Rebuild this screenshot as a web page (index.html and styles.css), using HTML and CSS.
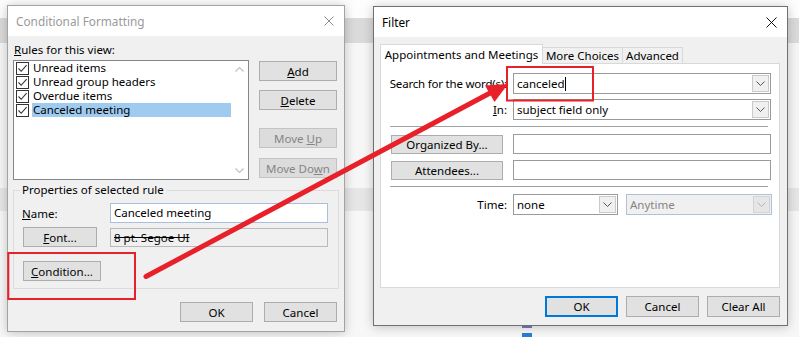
FILE: index.html
```html
<!DOCTYPE html>
<html lang="en">
<head>
  <meta charset="UTF-8">
  <meta name="viewport" content="width=device-width, initial-scale=1.0">
  <title>Conditional Formatting - Filter</title>
  <link rel="stylesheet" href="styles.css">
</head>
<body>
  <!-- the mail window behind the dialogs -->
  <div class="app">
    <div class="app-top"></div>
    <div class="app-ribbon"></div>
    <div class="app-pane"></div>
    <div class="app-header"></div>
    <div class="app-list">
      <span class="mark purple"></span>
      <span class="mark blue"></span>
    </div>
  </div>

  <div class="dlg dlg-cf">
    <div class="titlebar">
      <span class="title">Conditional Formatting</span>
      <svg class="close" width="10" height="10" viewBox="0 0 10 10">
        <path d="M0.5 0.5L9.5 9.5M9.5 0.5L0.5 9.5" stroke="#8c8c8c" stroke-width="1" fill="none"/>
      </svg>
    </div>
    <div class="cf-body">
      <div class="cf-label"><u>R</u>ules for this view:</div>
      <div class="rules-row">
        <div class="listbox">
          <div class="rules">
            <div class="rule"><span class="cb"><svg width="11" height="11" viewBox="0 0 11 11"><path d="M1.5 5.5L4.2 8.3L9.6 2.2" stroke="#333" stroke-width="1.1" fill="none"/></svg></span><span class="rule-name">Unread items</span></div>
            <div class="rule"><span class="cb"><svg width="11" height="11" viewBox="0 0 11 11"><path d="M1.5 5.5L4.2 8.3L9.6 2.2" stroke="#333" stroke-width="1.1" fill="none"/></svg></span><span class="rule-name">Unread group headers</span></div>
            <div class="rule"><span class="cb"><svg width="11" height="11" viewBox="0 0 11 11"><path d="M1.5 5.5L4.2 8.3L9.6 2.2" stroke="#333" stroke-width="1.1" fill="none"/></svg></span><span class="rule-name">Overdue items</span></div>
            <div class="rule sel"><span class="cb"><svg width="11" height="11" viewBox="0 0 11 11"><path d="M1.5 5.5L4.2 8.3L9.6 2.2" stroke="#333" stroke-width="1.1" fill="none"/></svg></span><span class="rule-name">Canceled meeting</span></div>
          </div>
          <div class="vscroll">
            <span class="arrow"><svg width="9" height="5" viewBox="0 0 9 5"><path d="M0.5 4.5L4.5 0.5L8.5 4.5" stroke="#c2c2c2" stroke-width="1.2" fill="none"/></svg></span>
            <span class="arrow"><svg width="9" height="5" viewBox="0 0 9 5"><path d="M0.5 0.5L4.5 4.5L8.5 0.5" stroke="#c2c2c2" stroke-width="1.2" fill="none"/></svg></span>
          </div>
        </div>
        <div class="side">
          <button class="btn btn-add"><u>A</u>dd</button>
          <button class="btn btn-delete"><u>D</u>elete</button>
          <button class="btn btn-up" disabled>Move <u>U</u>p</button>
          <button class="btn btn-down" disabled>Move Do<u>w</u>n</button>
        </div>
      </div>

      <fieldset class="props">
        <legend>Properties of selected rule</legend>
        <div class="prop-row">
          <label><u>N</u>ame:</label>
          <div class="field">Canceled meeting</div>
        </div>
        <div class="prop-row font-row">
          <button class="btn btn-font"><u>F</u>ont...</button>
          <div class="field field-ro"><s>8 pt. Segoe UI</s></div>
        </div>
        <div class="prop-row cond-row">
          <button class="btn btn-cond"><u>C</u>ondition...</button>
        </div>
      </fieldset>

      <div class="footer">
        <button class="btn">OK</button>
        <button class="btn">Cancel</button>
      </div>
    </div>
  </div>

  <div class="dlg dlg-filter">
    <div class="titlebar">
      <span class="title">Filter</span>
      <svg class="close" width="11" height="11" viewBox="0 0 11 11">
        <path d="M0.5 0.5L10.5 10.5M10.5 0.5L0.5 10.5" stroke="#111" stroke-width="1" fill="none"/>
      </svg>
    </div>
    <div class="fl-body">
      <div class="tabs">
        <div class="tab active">Appointments and Meetings</div>
        <div class="tab tab-more">More Choices</div>
        <div class="tab tab-adv">Advanced</div>
      </div>
      <div class="panel">
        <div class="frow">
          <label class="tight">Search for the word<u>(s)</u>:</label>
          <div class="combo">canceled<span class="caret"></span>
            <span class="drop"><svg width="9" height="5" viewBox="0 0 9 5"><path d="M0.5 0.5L4.5 4.5L8.5 0.5" stroke="#555" stroke-width="1" fill="none"/></svg></span>
          </div>
        </div>
        <div class="frow in-row">
          <label><u>I</u>n:</label>
          <div class="combo">subject field only
            <span class="drop"><svg width="9" height="5" viewBox="0 0 9 5"><path d="M0.5 0.5L4.5 4.5L8.5 0.5" stroke="#555" stroke-width="1" fill="none"/></svg></span>
          </div>
        </div>
        <div class="sep"></div>
        <div class="frow btn-row">
          <button class="btn btn-wide">Organized By...</button>
          <div class="input"></div>
        </div>
        <div class="frow btn-row second">
          <button class="btn btn-wide">Attendees...</button>
          <div class="input"></div>
        </div>
        <div class="sep"></div>
        <div class="frow time-row">
          <label>Time:</label>
          <div class="combo">none
            <span class="drop"><svg width="9" height="5" viewBox="0 0 9 5"><path d="M0.5 0.5L4.5 4.5L8.5 0.5" stroke="#555" stroke-width="1" fill="none"/></svg></span>
          </div>
          <div class="combo disabled">Anytime
            <span class="drop"><svg width="9" height="5" viewBox="0 0 9 5"><path d="M0.5 0.5L4.5 4.5L8.5 0.5" stroke="#b4b4b4" stroke-width="1" fill="none"/></svg></span>
          </div>
        </div>
      </div>
      <div class="fl-foot">
        <button class="btn btn-default">OK</button>
        <button class="btn">Cancel</button>
        <button class="btn">Clear All</button>
      </div>
    </div>
  </div>

  <!-- red call-outs drawn over the screenshot -->
  <svg class="annot" width="799" height="337" viewBox="0 0 799 337">
    <rect x="8.3" y="253" width="126.7" height="46" fill="none" stroke="#e8202a" stroke-width="2"/>
    <rect x="507" y="67" width="86" height="33.5" fill="none" stroke="#e8202a" stroke-width="2"/>
    <line x1="146" y1="276.5" x2="491" y2="92.5" stroke="#e8202a" stroke-width="5" stroke-linecap="round"/>
    <polygon points="508,84 485,85.5 494.5,102" fill="#e8202a"/>
  </svg>
</body>
</html>
```

FILE: styles.css
```css
* {
  box-sizing: border-box;
}

body {
  margin: 0;
  width: 799px;
  height: 337px;
  overflow: hidden;
  position: relative;
  background-color: #f7f7f7;
  font-family: "Noto Sans", "Segoe UI", sans-serif;
  font-size: 11.5px;
  color: #000;
}

/* background window */
.app-top {
  height: 18px;
  background-color: #fdfdfd;
}
.app-ribbon {
  height: 25px;
  background-color: #dadada;
}
.app-pane {
  height: 145px;
  background-color: #f6f6f6;
}
.app-header {
  height: 23px;
  background-color: #e6e6e6;
}
.app-list {
  padding: 112px 0 0 522px;
  display: flex;
  flex-direction: column;
  gap: 5px;
}
.mark {
  display: block;
  width: 10px;
  height: 5px;
}
.mark.purple {
  border: 2px solid #8174c4;
  background-color: #d8d3ef;
}
.mark.blue {
  background-color: #2b7cd3;
}

/* dialogs */
.dlg {
  position: absolute;
  display: flex;
  flex-direction: column;
  background-color: #f0f0f0;
  border: 1px solid #a3a3a3;
  box-shadow: 0 1px 10px rgba(0, 0, 0, 0.22);
}
.dlg-cf {
  left: 7px;
  top: 5px;
  width: 338px;
  height: 327px;
}
.dlg-filter {
  left: 373px;
  top: 6px;
  width: 415px;
  height: 320px;
  border-color: #707070;
}

.titlebar {
  flex: none;
  height: 30px;
  background-color: #fff;
  display: flex;
  align-items: center;
  justify-content: space-between;
  padding: 0 10px 0 8px;
}
.title {
  font-size: 11.8px;
}
.dlg-cf .title {
  color: #9a9a9a;
}

.btn {
  font: inherit;
  color: #000;
  height: 20px;
  padding: 0;
  background-color: #e1e1e1;
  border: 1px solid #adadad;
  border-radius: 0;
}
.btn:disabled {
  color: #858585;
  background-color: #dcdcdc;
  border-color: #c3c3c3;
}

/* conditional formatting */
.cf-body {
  padding: 0 5px;
}
.cf-label {
  height: 16px;
  line-height: 16px;
  margin-top: 6px;
  padding-left: 1px;
}
.rules-row {
  display: flex;
  margin-top: 2px;
}
.listbox {
  width: 236px;
  height: 120px;
  display: flex;
  background-color: #fff;
  border: 1px solid #828790;
}
.rules {
  flex: 1;
  padding-left: 2px;
}
.rule {
  display: flex;
  align-items: center;
  height: 14px;
}
.cb {
  width: 13px;
  height: 13px;
  border: 1px solid #333;
  margin-right: 3px;
  display: flex;
}
.rule-name {
  flex: 1;
  line-height: 14px;
  padding-left: 1px;
}
.rule.sel .rule-name {
  background-color: #9fcbf0;
}
.vscroll {
  width: 17px;
  display: flex;
  flex-direction: column;
  justify-content: space-between;
}
.arrow {
  height: 17px;
  display: flex;
  align-items: center;
  justify-content: center;
}

.side {
  width: 78px;
  margin-left: 10px;
  display: flex;
  flex-direction: column;
}
.btn-add {
  margin-top: 1px;
}
.btn-delete {
  margin-top: 9px;
}
.btn-up {
  margin-top: 18px;
}
.btn-down {
  margin-top: 10px;
}

.props {
  margin: 3px 0 0;
  padding: 6px 10px 7px 8px;
  border: 1px solid #dcdcdc;
}
.props legend {
  padding: 0 2px;
  margin-left: -2px;
  line-height: 14px;
}
.prop-row {
  display: grid;
  grid-template-columns: 88px 1fr;
  align-items: center;
  height: 20px;
}
.font-row {
  margin-top: 4px;
}
.cond-row {
  margin-top: 14px;
}
.field {
  height: 20px;
  line-height: 18px;
  padding-left: 3px;
  background-color: #fff;
  border: 1px solid #a9c0dc;
}
.field-ro {
  height: 19px;
  line-height: 17px;
  background-color: #f0f0f0;
  border-color: #b9b9b9;
}
.btn-font {
  width: 74px;
  margin-left: 1px;
}
.btn-cond {
  width: 78px;
  margin-left: 1px;
}

.footer {
  display: flex;
  justify-content: flex-end;
  gap: 11px;
  margin-top: 13px;
  padding-right: 2px;
}
.footer .btn {
  width: 73px;
}

/* filter */
.fl-body {
  padding: 7px 7px 0 6px;
}
.tabs {
  display: flex;
  align-items: flex-end;
  height: 19px;
}
.tab {
  height: 16px;
  line-height: 15px;
  text-align: center;
  background-color: #f0f0f0;
  border: 1px solid #d9d9d9;
  border-bottom: none;
}
.tab.active {
  width: 163px;
  height: 20px;
  line-height: 19px;
  margin-bottom: -1px;
  background-color: #fff;
  position: relative;
  z-index: 1;
}
.tab-more {
  width: 81px;
  margin-left: -1px;
}
.tab-adv {
  width: 61px;
  margin-left: -1px;
}
.panel {
  height: 225px;
  padding: 9px 8px 0 10px;
  background-color: #fff;
  border: 1px solid #d9d9d9;
}
.frow {
  display: grid;
  grid-template-columns: 122px 258px;
  align-items: center;
}
.frow label {
  display: flex;
  justify-content: flex-end;
  white-space: nowrap;
  padding-right: 6px;
}
.frow label.tight {
  letter-spacing: -0.2px;
}
.in-row {
  margin-top: 5px;
}
.combo {
  height: 21px;
  display: flex;
  align-items: center;
  padding-left: 3px;
  background-color: #fff;
  border: 1px solid #9a9a9a;
}
.caret {
  width: 1px;
  height: 14px;
  background-color: #000;
}
.drop {
  margin-left: auto;
  margin-right: 1px;
  width: 17px;
  height: 17px;
  display: flex;
  align-items: center;
  justify-content: center;
  background-color: #f0f0f0;
  border: 1px solid #cacaca;
}
.combo.disabled {
  width: 146px;
  margin-left: 8px;
  color: #858585;
  background-color: #f0f0f0;
  border-color: #aec2d9;
}
.combo.disabled .drop {
  background-color: #e6e6e6;
  border-color: #d4d4d4;
}
.sep {
  width: 378px;
  height: 1px;
  margin: 6px 0 0 -1px;
  background-color: #a0a0a0;
}
.btn-row {
  height: 20px;
  margin-top: 7px;
}
.btn-row.second {
  margin-top: 6px;
}
.btn-wide {
  width: 112px;
  height: 19px;
}
.input {
  height: 20px;
  background-color: #fff;
  border: 1px solid #9a9a9a;
}
.time-row {
  margin-top: 7px;
  grid-template-columns: 122px 105px 154px;
}
.fl-foot {
  display: flex;
  justify-content: flex-end;
  gap: 8px;
  margin-top: 8px;
}
.fl-foot .btn {
  width: 73px;
  height: 21px;
}
.btn-default {
  border: 2px solid #0078d7;
}

.annot {
  position: absolute;
  left: 0;
  top: 0;
  pointer-events: none;
}
```
